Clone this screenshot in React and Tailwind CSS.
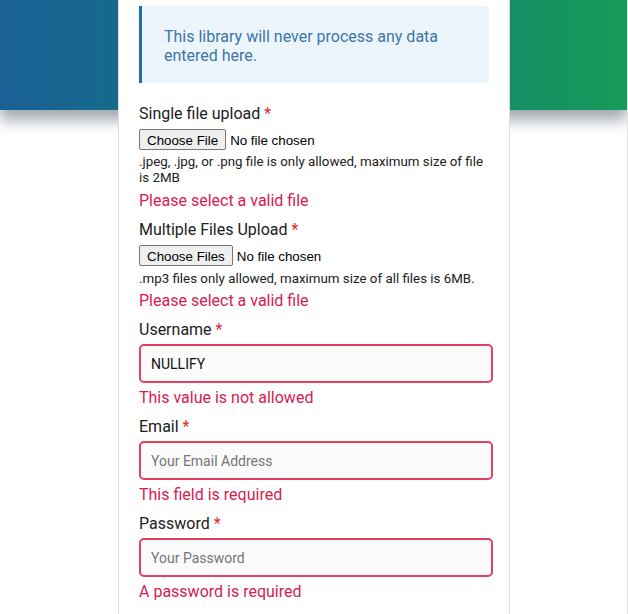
import React from 'react';

const Label = ({ children }) => (
    <label className="block text-[16px] leading-[24px] text-[#212121]">
        {children} <span className="text-[#e8282b]">*</span>
    </label>
);

const Error = ({ children, className = '' }) => (
    <p className={`text-[16px] leading-[24px] text-[#d81b50] ${className}`}>{children}</p>
);

const fileClass =
    "block h-[21px] text-[13.33px] leading-[21px] text-black [font-family:'Liberation_Sans',Arial,sans-serif] " +
    "file:mr-[4px] file:h-[21px] file:px-[7px] file:border file:border-[#767676] file:rounded-[2px] file:bg-[#efefef] file:text-black file:text-[13.33px]";

const TextField = ({ label, value, placeholder, error, type = 'text' }) => (
    <div className="mb-[5px]">
        <Label>{label}</Label>
        <input
            type={type}
            defaultValue={value}
            placeholder={placeholder}
            className="mt-[2px] block w-[354px] h-[39px] px-[10px] rounded-[5px] border-2 border-[#e3405f] bg-[#fbfbfb] text-[14px] text-[#111] placeholder:text-[#757575] outline-none"
        />
        <Error className="mt-[3px]">{error}</Error>
    </div>
);

export default function App() {
    return (
        <div className="min-h-[614px] bg-white border-r border-[#e2e2e2] [font-family:Roboto,'Noto_Sans',sans-serif] overflow-hidden">
            <div className="h-[110px] bg-gradient-to-r from-[#1a6096] via-[#177a78] to-[#169b58] shadow-[0_10px_14px_rgba(40,60,80,0.45)]" />
            <div className="relative z-10 -mt-[110px] ml-[118px] w-[392px] min-h-[614px] bg-white border-x border-[#dcdcdc] pl-[20px] pr-[16px] pt-[6px]">
                <div className="w-[350px] h-[77px] bg-[#edf5fc] border-l-[3px] border-[#1f6faa] pl-[22px] pr-[16px] pt-[21px]">
                    <p className="text-[16px] leading-[19px] text-[#3a76a8]">This library will never process any data entered here.</p>
                </div>

                <div className="mt-[19px]">
                    <Label>Single file upload</Label>
                    <input type="file" className={`mt-[3px] ${fileClass}`} />
                    <p className="mt-[4px] text-[13.33px] leading-[16px] text-[#212121]">.jpeg, .jpg, or .png file is only allowed, maximum size of file is 2MB</p>
                    <Error className="mt-[3px]">Please select a valid file</Error>
                </div>

                <div className="mt-[5px]">
                    <Label>Multiple Files Upload</Label>
                    <input type="file" multiple className={`mt-[3px] ${fileClass}`} />
                    <p className="mt-[5px] text-[13.33px] leading-[16px] text-[#212121]">.mp3 files only allowed, maximum size of all files is 6MB.</p>
                    <Error className="mt-[2px]">Please select a valid file</Error>
                </div>

                <div className="mt-[5px]">
                    <TextField label="Username" value="NULLIFY" error="This value is not allowed" />
                    <TextField label="Email" type="email" placeholder="Your Email Address" error="This field is required" />
                    <TextField label="Password" type="password" placeholder="Your Password" error="A password is required" />
                </div>
            </div>
        </div>
    );
}
